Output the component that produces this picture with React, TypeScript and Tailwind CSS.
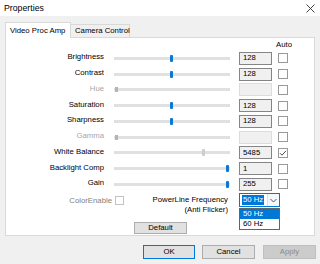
import React from "react";

type Row = {
  label: string;
  value: string;
  thumb: number;
  mode: "blue" | "gray" | "off";
  checked?: boolean;
};

const rows: Row[] = [
  { label: "Brightness", value: "128", thumb: 57.7, mode: "blue" },
  { label: "Contrast", value: "128", thumb: 57.7, mode: "blue" },
  { label: "Hue", value: "", thumb: 2, mode: "off" },
  { label: "Saturation", value: "128", thumb: 57.7, mode: "blue" },
  { label: "Sharpness", value: "128", thumb: 57.7, mode: "blue" },
  { label: "Gamma", value: "", thumb: 2, mode: "off" },
  { label: "White Balance", value: "5485", thumb: 89, mode: "gray", checked: true },
  { label: "Backlight Comp", value: "1", thumb: 113.7, mode: "blue" },
  { label: "Gain", value: "255", thumb: 113.7, mode: "blue" },
];

function SliderRow({ r }: { r: Row }) {
  const off = r.mode === "off";
  return (
    <div className="flex items-center h-[15.75px]">
      <div
        className={
          off
            ? "w-[98px] text-right leading-[10px] -translate-y-[0.75px] text-[#a6a6a6] whitespace-nowrap"
            : "w-[98px] text-right leading-[10px] -translate-y-[0.75px] text-black whitespace-nowrap"
        }
      >
        {r.label}
      </div>
      <div className="relative ml-[10px] w-[116px] h-[9px] flex items-center">
        <div className="w-full h-[3px] bg-[#e0e0e0]" />
        {r.mode === "blue" && (
          <div
            className="absolute top-[1px] w-[3px] h-[7px] rounded-[1px] bg-[#0a78d4]"
            style={{ left: r.thumb - 1.5 }}
          />
        )}
        {r.mode === "gray" && (
          <div
            className="absolute top-[1px] w-[3px] h-[7px] rounded-[1px] bg-[#cdcdcd]"
            style={{ left: r.thumb - 1.5 }}
          />
        )}
        {r.mode === "off" && (
          <div
            className="absolute top-[2px] w-[3px] h-[5px] bg-[#b4b4b4]"
            style={{ left: r.thumb - 1.5 }}
          />
        )}
      </div>
      <div
        className={
          off
            ? "ml-[9px] w-[33px] h-[13px] border border-[#dcdcdc] bg-[#f0f0f0]"
            : "ml-[9px] w-[33px] h-[13px] border border-[#858585] bg-[#f0f0f0] pl-[3px] flex items-center leading-[10px] text-black"
        }
      >
        {r.value}
      </div>
      <div className="ml-[6px] w-[10px] h-[10px] border border-[#999999] bg-white flex items-center justify-center">
        {r.checked && (
          <svg width="8" height="8" viewBox="0 0 8 8">
            <polyline points="1,4.2 3,6.2 7,1.8" fill="none" stroke="#333" strokeWidth="0.9" />
          </svg>
        )}
      </div>
    </div>
  );
}

export default function App() {
  return (
    <div className="w-[320px] h-[264px] bg-[#f0f0f0] flex flex-col font-['Liberation_Sans',Arial,sans-serif] text-[7.75px] text-black overflow-hidden">
      {/* Title bar */}
      <div className="h-[16px] bg-white flex items-center justify-between pl-[4px] pr-[5px]">
        <span className="text-[8.75px] leading-[10px]">Properties</span>
        <svg width="9" height="9" viewBox="0 0 9 9">
          <line x1="0.5" y1="0.5" x2="8.5" y2="8.5" stroke="#2b2b2b" strokeWidth="0.9" />
          <line x1="8.5" y1="0.5" x2="0.5" y2="8.5" stroke="#2b2b2b" strokeWidth="0.9" />
        </svg>
      </div>

      {/* Tabs */}
      <div className="h-[21px] flex items-end pl-[5px]">
        <div className="relative z-10 h-[16px] w-[66px] bg-white border border-b-0 border-[#d9d9d9] flex items-center pl-[4px] leading-[10px] translate-y-[1px] whitespace-nowrap">
          Video Proc Amp
        </div>
        <div className="h-[13px] w-[59px] bg-[#f0f0f0] border border-l-0 border-b-0 border-[#d9d9d9] flex items-center pl-[4px] leading-[10px] whitespace-nowrap">
          Camera Control
        </div>
      </div>

      {/* Panel */}
      <div className="mx-[5px] h-[199px] border border-[#d9d9d9] bg-white flex flex-col pt-[2px]">
        <div className="h-[10.5px] flex items-center">
          <div className="ml-[270px] w-[14px] text-center leading-[10px]">Auto</div>
        </div>
        {rows.map((r) => (
          <SliderRow key={r.label} r={r} />
        ))}

        {/* bottom controls */}
        <div className="h-[28px] flex items-start">
          <div className="w-[106px] mt-[4px] text-right leading-[10px] text-[#808080]">ColorEnable</div>
          <div className="ml-[3px] mt-[3.75px] w-[9px] h-[9px] border border-[#c4c4c4] bg-white" />
          <div className="w-[104px] mt-[2.75px] text-right leading-[10px] flex flex-col whitespace-nowrap">
            <span>PowerLine Frequency</span>
            <span>(Anti Flicker)</span>
          </div>
          <div className="relative ml-[11px] mt-[1px] w-[41px] h-[14px] border border-[#0078d7] bg-white flex items-stretch">
            <div className="flex-1 flex items-center pl-[2px]">
              <span className="bg-[#0078d7] text-white leading-[10px] px-[1px] whitespace-nowrap">50 Hz</span>
            </div>
            <div className="w-[12px] border-l border-[#cfe3f7] bg-[#f4f8fc] flex items-center justify-center">
              <svg width="7" height="5" viewBox="0 0 7 5">
                <polyline points="0.5,1 3.5,4 6.5,1" fill="none" stroke="#444" strokeWidth="0.9" />
              </svg>
            </div>
            <div className="absolute left-[-1px] top-[14px] w-[41px] border border-[#646464] bg-white flex flex-col z-20">
              <div className="h-[10px] bg-[#0078d7] text-white pl-[3px] leading-[10px]">50 Hz</div>
              <div className="h-[10px] pl-[3px] leading-[10px]">60 Hz</div>
            </div>
          </div>
        </div>

        <div className="flex mt-[1.75px]">
          <div className="ml-[128px] w-[53px] h-[12px] bg-[#e1e1e1] border border-[#adadad] flex items-center justify-center leading-[10px]">
            Default
          </div>
        </div>
      </div>

      {/* Dialog buttons */}
      <div className="mt-[9px] flex justify-end pr-[4px] gap-[7px]">
        <div className="w-[52px] h-[14px] bg-[#e1e1e1] border border-[#0078d7] flex items-center justify-center leading-[10px]">
          OK
        </div>
        <div className="w-[53px] h-[14px] bg-[#e1e1e1] border border-[#adadad] flex items-center justify-center leading-[10px] mr-[1px]">
          Cancel
        </div>
        <div className="w-[53px] h-[14px] bg-[#cccccc] border border-[#bfbfbf] flex items-center justify-center leading-[10px] text-[#8a8a8a]">
          Apply
        </div>
      </div>
    </div>
  );
}
